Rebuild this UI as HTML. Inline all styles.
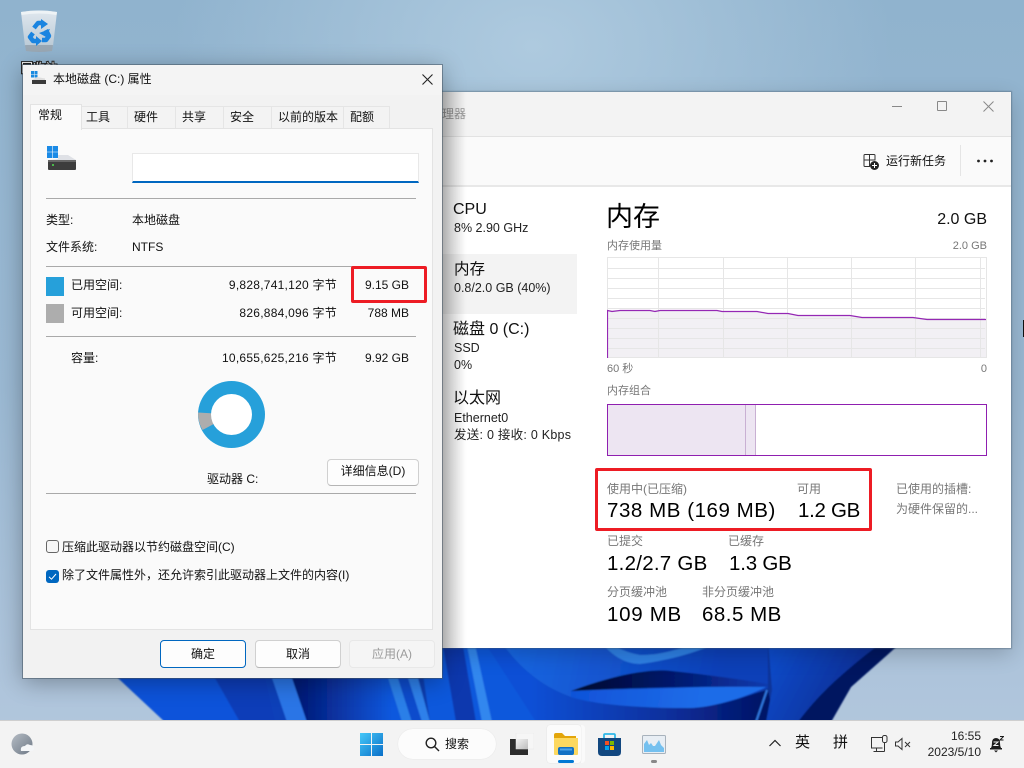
<!DOCTYPE html>
<html lang="zh-CN">
<head>
<meta charset="utf-8">
<title>内存</title>
<style>
html,body{margin:0;padding:0;width:1024px;height:768px;overflow:hidden}
body{position:relative;font-family:"Liberation Sans","Noto Sans CJK SC",sans-serif;font-size:12px;color:#111;background:#9dbbd4}
.a{position:absolute}
.t{position:absolute;white-space:nowrap;line-height:16px;height:16px}
.r{text-align:right}
.g{color:#777;font-size:11px}
.g2{color:#777;font-size:12px}
.hr{position:absolute;left:46px;width:370px;height:1px;background:#a9a9a9}
.tab{position:absolute;top:106px;height:22px;background:#f3f3f3;border:1px solid #e5e5e5;border-bottom:none;box-sizing:border-box}
.btn{position:absolute;box-sizing:border-box;background:#fdfdfd;border:1px solid #d0d0d0;border-bottom-color:#b5b5b5;border-radius:4px;text-align:center;line-height:26px;font-size:12px}
.big{font-size:20.5px;line-height:26px;height:26px;color:#000}
.side{font-size:16px;line-height:20px;height:20px}
.sub{font-size:12.5px;color:#222}
.red{position:absolute;box-sizing:border-box;border:3px solid #ed1c24;border-radius:2px}
.by{letter-spacing:.25px}
</style>
</head>
<body>
<svg class="a" style="left:0;top:0" width="1024" height="768" viewBox="0 0 1024 768">
<defs>
<linearGradient id="sky" x1="0" y1="0" x2="0" y2="1"><stop offset="0" stop-color="#90b3ce"/><stop offset=".5" stop-color="#9ab8d2"/><stop offset="1" stop-color="#b4c8de"/></linearGradient>
<radialGradient id="glow" cx=".52" cy=".06" r=".35"><stop offset="0" stop-color="#aecadf"/><stop offset="1" stop-color="#aecadf" stop-opacity="0"/></radialGradient>
<linearGradient id="rt" x1="0" y1="0" x2="1" y2="0"><stop offset="0" stop-color="#0c45c4"/><stop offset="1" stop-color="#09308f"/></linearGradient>
<linearGradient id="l3" gradientUnits="userSpaceOnUse" x1="300" y1="0" x2="392" y2="0"><stop offset="0" stop-color="#031a78"/><stop offset="1" stop-color="#0e58de"/></linearGradient>
<linearGradient id="low" gradientUnits="userSpaceOnUse" x1="530" y1="0" x2="760" y2="0"><stop offset="0" stop-color="#0f50d6"/><stop offset=".6" stop-color="#0a2f9c"/><stop offset="1" stop-color="#031468"/></linearGradient>
<linearGradient id="mid" gradientUnits="userSpaceOnUse" x1="570" y1="690" x2="700" y2="708"><stop offset="0" stop-color="#0f52d8"/><stop offset="1" stop-color="#1e6ce8"/></linearGradient>
<linearGradient id="wed" gradientUnits="userSpaceOnUse" x1="571" y1="0" x2="766" y2="0"><stop offset="0" stop-color="#01062c"/><stop offset=".55" stop-color="#041a70"/><stop offset="1" stop-color="#0a3aae"/></linearGradient>
<linearGradient id="top" gradientUnits="userSpaceOnUse" x1="500" y1="648" x2="720" y2="690"><stop offset="0" stop-color="#1a68e4"/><stop offset="1" stop-color="#0a3fb8"/></linearGradient>
<linearGradient id="rgt" gradientUnits="userSpaceOnUse" x1="770" y1="648" x2="870" y2="700"><stop offset="0" stop-color="#0d4ccc"/><stop offset="1" stop-color="#08298c"/></linearGradient>
<linearGradient id="bin" x1="0" y1="0" x2="0" y2="1"><stop offset="0" stop-color="#dfe7ee"/><stop offset="1" stop-color="#bccbd7"/></linearGradient>
<filter id="soft" x="-5%" y="-5%" width="110%" height="110%"><feGaussianBlur stdDeviation=".7"/></filter>
</defs>
<rect width="1024" height="768" fill="url(#sky)"/>
<rect width="1024" height="768" fill="url(#glow)"/>
<g filter="url(#soft)">
<path d="M118 678L165 722H831L851 687L904 640H100Z" fill="url(#rt)"/>
<path d="M118 678L165 722H240L215 678Z" fill="#0d52da"/>
<path d="M215 678L240 722H275L265 678Z" fill="#0a3cb8"/>
<path d="M272 678L287 722H307L292 678Z" fill="#2a74e6"/>
<path d="M292 678L307 722H402L388 678Z" fill="url(#l3)"/>
<path d="M388 678L402 722H412L398 678Z" fill="#2b7fe8"/>
<path d="M398 678L412 722H422L408 678Z" fill="#0e4ccc"/>
<path d="M408 678L422 722H430L418 678Z" fill="#2f80ea"/>
<path d="M418 640L430 722H538L483 640Z" fill="#1158dc"/>
<path d="M442 640L456 722H476L462 640Z" fill="#0a37ae"/>
<path d="M466 640L482 722H492L474 640Z" fill="#3287ee"/>
<path d="M483 640L536 722H775L768 690C740 697 710 708 689 708C650 708 600 706 571 697C545 688 520 670 500 640Z" fill="url(#low)"/>
<path d="M500 640C520 670 545 688 571 697C600 706 650 708 689 708C710 708 745 698 768 688L768 640Z" fill="url(#top)"/>
<path d="M571 691C630 690 710 686 768 686C745 698 710 708 689 708C650 708 600 706 571 697Z" fill="url(#mid)"/>
<path d="M571 691C610 676 650 668 672 671C710 675 745 680 768 684L768 687C700 686 630 688 571 691Z" fill="url(#wed)"/>
<path d="M600 640C610 655 625 664 640 664C670 660 700 652 722 640L700 640C680 650 660 655 640 655C625 652 615 648 612 640Z" fill="#2e80e4"/>
<path d="M768 640L772 690L766 722H800L835 690L885 640Z" fill="url(#rgt)"/>
<path d="M798 722C815 700 830 682 885 640L904 640L851 687L831 722Z" fill="#021460"/>
<path d="M767 690L756 722" stroke="#2f78e0" stroke-width="2" fill="none"/>
</g>
<!-- recycle bin -->
<path d="M21 12Q39 9 57 12L53 46H25Z" fill="url(#bin)"/>
<path d="M21 12Q39 9 57 12L56.500 15Q39 12 21.500 15Z" fill="#eef3f6"/>
<path d="M25 45H53L52 51Q39 53 26 51Z" fill="#9aa8b4"/>
<g fill="none" stroke="#1a84e0" stroke-width="4.500" stroke-linejoin="round"><path d="M34 28L38 23H42"/><path d="M33 33L30 37L33 41H37"/><path d="M46 30L49 36L46 40H42"/></g>
<g fill="#1a84e0"><path d="M41 19L48 24L41 29Z"/><path d="M36 36L42 41L36 46Z"/><path d="M39 33L50 29L46 37Z"/></g>
<text x="39" y="72" text-anchor="middle" font-size="12" fill="#fff" stroke="#222" stroke-width="2" paint-order="stroke" font-family="Liberation Sans,Noto Sans CJK SC,sans-serif">回收站</text>
</svg>
<div class="a" style="left:1023px;top:320px;width:1px;height:17px;background:#111"></div>

<!-- Task manager -->
<div class="a" style="left:420px;top:92px;width:591px;height:556px;background:#fff;box-shadow:0 0 1px 1px rgba(70,90,110,.45),0 6px 20px rgba(0,0,0,.2)">
  <div class="a" style="left:0;top:0;width:591px;height:44px;background:#f3f3f3;border-bottom:1px solid #e2e2e2"></div>
  <div class="a" style="left:0;top:45px;width:591px;height:48px;background:#fafafa;border-bottom:2px solid #e8e8e8"></div>
</div>
<div class="t" style="left:406px;top:106px;color:#999">任务管理器</div>
<div class="a" style="left:892px;top:106px;width:10px;height:1px;background:#888"></div>
<div class="a" style="left:937px;top:101px;width:10px;height:10px;box-sizing:border-box;border:1px solid #888;border-radius:1px"></div>
<svg class="a" style="left:983px;top:101px" width="11" height="11"><path d="M.5.5L10.5 10.5M10.5.5L.5 10.5" stroke="#888" fill="none"/></svg>
<svg class="a" style="left:862px;top:153px" width="18" height="18" fill="none" stroke="#333" stroke-width="1"><path d="M2 7V2.500Q2 1.500 3 1.500H7.500V7ZM7.500 1.500H12Q13 1.500 13 2.500V7H7.500ZM2 7H7.500V13.500H3Q2 13.500 2 12.500Z"/><circle cx="12.500" cy="12.500" r="4.500" fill="#222" stroke="none"/><path d="M10 12.500H15M12.500 10V15" stroke="#fff"/></svg>
<div class="t" style="left:886px;top:153px">运行新任务</div>
<div class="a" style="left:960px;top:145px;width:1px;height:31px;background:#e5e5e5"></div>
<svg class="a" style="left:976px;top:159px" width="18" height="4" fill="#222"><circle cx="2.500" cy="2" r="1.400"/><circle cx="9" cy="2" r="1.400"/><circle cx="15.500" cy="2" r="1.400"/></svg>

<div class="a" style="left:442px;top:254px;width:135px;height:60px;background:#f3f3f3"></div>
<div class="t side" style="left:453px;top:200px">CPU</div>
<div class="t sub" style="left:454px;top:220px">8% 2.90 GHz</div>
<div class="t side" style="left:454px;top:260px;font-size:15.5px">内存</div>
<div class="t sub" style="left:454px;top:280px">0.8/2.0 GB (40%)</div>
<div class="t side" style="left:453px;top:320px">磁盘 0 (C:)</div>
<div class="t sub" style="left:454px;top:340px">SSD</div>
<div class="t sub" style="left:454px;top:357px">0%</div>
<div class="t side" style="left:453px;top:389px">以太网</div>
<div class="t sub" style="left:454px;top:410px">Ethernet0</div>
<div class="t sub" style="left:454px;top:427px;letter-spacing:.25px">发送: 0 接收: 0 Kbps</div>
<div class="a" style="left:442px;top:92px;width:24px;height:556px;background:linear-gradient(90deg,rgba(0,0,0,.2),rgba(0,0,0,0))"></div>

<div class="t" style="left:606px;top:199px;font-size:27px;line-height:36px;height:36px;color:#000">内存</div>
<div class="t r" style="right:37px;top:210px;font-size:16px;line-height:20px;height:20px;color:#111">2.0 GB</div>
<div class="t g" style="left:607px;top:238px">内存使用量</div>
<div class="t g r" style="right:37px;top:238px">2.0 GB</div>
<svg class="a" style="left:607px;top:257px" width="381" height="102" viewBox="607 257 381 102" shape-rendering="crispEdges">
<path d="M607 310H640L650 310.500L660 310H717L720 311.500H757L768 313.500H788L798 315.500H850L862 317.500H913L927 319.500H987V358H607Z" fill="#f2f0f4"/>
<g stroke="#e6e6e6" fill="none"><path d="M607.500 257.500H986.500V357.500H607.500Z"/><path d="M608 268.500H985M608 278.500H985M608 288.500H985M608 298.500H985M608 308.500H985M608 318.500H985M608 328.500H985M608 338.500H985M608 348.500H985"/><path d="M658.500 258V357M723.500 258V357M787.500 258V357M851.500 258V357M915.500 258V357M980.500 258V357"/></g>
<path d="M607.500 358V310.500L612 311.500L620 310.500H650L655 311.500L660 310.500H717L722 311.500H757L768 313.500H788L798 315.500H850L862 317.500H913L927 319.500H986" fill="none" stroke="#9528b4" stroke-width="1.200" shape-rendering="auto"/>
</svg>
<div class="t g" style="left:607px;top:361px">60 秒</div>
<div class="t g r" style="right:37px;top:361px">0</div>
<div class="t g" style="left:607px;top:383px">内存组合</div>
<div class="a" style="left:607px;top:404px;width:380px;height:52px;box-sizing:border-box;border:1px solid #8f1fb0;background:#fff">
  <div class="a" style="left:0;top:0;width:137px;height:50px;background:#ede5f2;border-right:1px solid #c9b0d3"></div>
  <div class="a" style="left:138px;top:0;width:9px;height:50px;background:#ede5f2;border-right:1px solid #c9b0d3"></div>
</div>
<div class="red" style="left:595px;top:468px;width:277px;height:63px"></div>
<div class="t g2" style="left:607px;top:481px">使用中(已压缩)</div>
<div class="t big" style="left:607px;top:498px;letter-spacing:.55px">738 MB (169 MB)</div>
<div class="t g2" style="left:797px;top:481px">可用</div>
<div class="t big" style="left:798px;top:498px;letter-spacing:-.3px">1.2 GB</div>
<div class="t g2" style="left:896px;top:481px">已使用的插槽:</div>
<div class="t g2" style="left:896px;top:501px">为硬件保留的...</div>
<div class="t g2" style="left:607px;top:533px">已提交</div>
<div class="t big" style="left:607px;top:551px;letter-spacing:.25px">1.2/2.7 GB</div>
<div class="t g2" style="left:728px;top:533px">已缓存</div>
<div class="t big" style="left:729px;top:551px;letter-spacing:-.2px">1.3 GB</div>
<div class="t g2" style="left:607px;top:584px">分页缓冲池</div>
<div class="t big" style="left:607px;top:602px;letter-spacing:.7px">109 MB</div>
<div class="t g2" style="left:702px;top:584px">非分页缓冲池</div>
<div class="t big" style="left:702px;top:602px;letter-spacing:.5px">68.5 MB</div>

<!-- Properties dialog -->
<div class="a" style="left:23px;top:65px;width:419px;height:613px;background:#f2f2f2;box-shadow:0 0 0 1px rgba(70,85,100,.55),0 4px 22px rgba(0,0,0,.32)">
  <div class="a" style="left:0;top:0;width:419px;height:30px;background:#f4f4f4"></div>
</div>
<svg class="a" style="left:31px;top:71px" width="16" height="13"><path d="M0 0h3v3H0zM3.500 0h3v3h-3zM0 3.500h3v3H0zM3.500 3.500h3v3h-3z" fill="#1a8ae0"/><path d="M6 6L14 7.500V9H1Z" fill="#ddd"/><rect x="1" y="9" width="14" height="4" fill="#3a3a3a"/></svg>
<div class="t" style="left:53px;top:71px">本地磁盘 (C:) 属性</div>
<svg class="a" style="left:421px;top:73px" width="13" height="13"><path d="M1.500 1.500L11.500 11.500M11.500 1.500L1.500 11.500" stroke="#222" stroke-width="1.100" fill="none"/></svg>

<div class="a" style="left:30px;top:128px;width:403px;height:502px;box-sizing:border-box;background:#fafafa;border:1px solid #e3e3e3"></div>
<div class="tab" style="left:81px;width:47px"></div>
<div class="tab" style="left:127px;width:49px"></div>
<div class="tab" style="left:175px;width:49px"></div>
<div class="tab" style="left:223px;width:49px"></div>
<div class="tab" style="left:271px;width:73px"></div>
<div class="tab" style="left:343px;width:47px"></div>
<div class="a" style="left:30px;top:104px;width:52px;height:26px;box-sizing:border-box;background:#fafafa;border:1px solid #e3e3e3;border-bottom:none"></div>
<div class="t" style="left:38px;top:107px">常规</div>
<div class="t" style="left:86px;top:109px">工具</div>
<div class="t" style="left:134px;top:109px">硬件</div>
<div class="t" style="left:182px;top:109px">共享</div>
<div class="t" style="left:230px;top:109px">安全</div>
<div class="t" style="left:278px;top:109px">以前的版本</div>
<div class="t" style="left:350px;top:109px">配额</div>

<svg class="a" style="left:46px;top:145px" width="32" height="27"><path d="M1 1h5.200v5.700H1zM6.800 1H12v5.700H6.800zM1 7.300h5.200V13H1zM6.800 7.300H12V13H6.800z" fill="#1a8ae6"/><path d="M12 10H22L30 15V16H3V15L12 14Z" fill="#dfe1e6"/><rect x="2" y="15" width="28" height="10" rx="1" fill="#3d3d3d"/><rect x="2" y="15" width="28" height="2" fill="#666"/><circle cx="7" cy="20" r="1" fill="#4fe04f"/></svg>
<div class="a" style="left:132px;top:153px;width:287px;height:30px;box-sizing:border-box;background:#fff;border:1px solid #e8e8e8;border-bottom:2px solid #0067c0"></div>
<div class="hr" style="top:198px"></div>
<div class="t" style="left:46px;top:212px">类型:</div>
<div class="t" style="left:132px;top:212px">本地磁盘</div>
<div class="t" style="left:46px;top:239px">文件系统:</div>
<div class="t" style="left:132px;top:239px">NTFS</div>
<div class="hr" style="top:266px"></div>
<div class="a" style="left:46px;top:277px;width:18px;height:19px;background:#26a0da"></div>
<div class="t" style="left:71px;top:277px">已用空间:</div>
<div class="t r by" style="right:687px;top:277px">9,828,741,120 字节</div>
<div class="t r" style="right:615px;top:277px">9.15 GB</div>
<div class="a" style="left:46px;top:304px;width:18px;height:19px;background:#adadad"></div>
<div class="t" style="left:71px;top:305px">可用空间:</div>
<div class="t r by" style="right:687px;top:305px">826,884,096 字节</div>
<div class="t r" style="right:615px;top:305px">788 MB</div>
<div class="hr" style="top:336px"></div>
<div class="t" style="left:71px;top:350px">容量:</div>
<div class="t r by" style="right:687px;top:350px">10,655,625,216 字节</div>
<div class="t r" style="right:615px;top:350px">9.92 GB</div>
<svg class="a" style="left:197px;top:380px" width="70" height="70"><circle cx="34.500" cy="34.500" r="33.500" fill="#26a0da"/><path d="M34.500 34.500L1 32.500A33.500 33.500 0 0 0 5.500 50Z" fill="#adadad"/><circle cx="34.500" cy="34.500" r="20.500" fill="#fff"/></svg>
<div class="t" style="left:207px;top:471px">驱动器 C:</div>
<div class="btn" style="left:327px;top:459px;width:92px;height:27px;line-height:23px">详细信息(D)</div>
<div class="hr" style="top:493px"></div>
<div class="a" style="left:46px;top:540px;width:13px;height:13px;box-sizing:border-box;border:1px solid #666;border-radius:3px;background:#f6f6f6"></div>
<div class="t" style="left:62px;top:539px">压缩此驱动器以节约磁盘空间(C)</div>
<svg class="a" style="left:46px;top:570px" width="13" height="13"><rect width="13" height="13" rx="3" fill="#0067c0"/><path d="M3 6.800L5.500 9.200L10 4" stroke="#fff" stroke-width="1" fill="none"/></svg>
<div class="t" style="left:62px;top:567px">除了文件属性外，还允许索引此驱动器上文件的内容(I)</div>
<div class="btn" style="left:160px;top:640px;width:86px;height:28px;border:1px solid #0067c0">确定</div>
<div class="btn" style="left:255px;top:640px;width:86px;height:28px">取消</div>
<div class="btn" style="left:349px;top:640px;width:86px;height:28px;background:#f5f5f5;border-color:#e8e8e8;color:#9b9b9b">应用(A)</div>
<div class="red" style="left:351px;top:266px;width:76px;height:37px"></div>

<!-- Taskbar -->
<div class="a" style="left:0;top:720px;width:1024px;height:48px;background:#f3f3f3;border-top:1px solid #cfcfcf;box-sizing:border-box"></div>
<svg class="a" style="left:11px;top:733px" width="24" height="23"><defs><linearGradient id="w" x1="0" y1="0" x2="1" y2="1"><stop offset="0" stop-color="#b5bcc4"/><stop offset="1" stop-color="#6d7885"/></linearGradient></defs><circle cx="11" cy="11" r="10.500" fill="url(#w)"/><path d="M10 18Q9 13 14 13Q16 10 19 12Q23 12 23 15.500Q23 18 20 18Z" fill="#f4f6f8"/></svg>
<svg class="a" style="left:360px;top:733px" width="23" height="23"><defs><linearGradient id="s" x1="0" y1="0" x2="1" y2="1"><stop offset="0" stop-color="#45c8f8"/><stop offset="1" stop-color="#0a6fc8"/></linearGradient></defs><rect width="23" height="23" fill="url(#s)"/><path d="M11.500 0V23M0 11.500H23" stroke="#f3f3f3" stroke-width="1"/></svg>
<div class="a" style="left:398px;top:729px;width:98px;height:30px;background:#fcfcfc;border-radius:15px;box-shadow:0 0 1px rgba(0,0,0,.12)"></div>
<svg class="a" style="left:425px;top:737px" width="15" height="15" fill="none" stroke="#222" stroke-width="1.400"><circle cx="6" cy="6" r="4.800"/><path d="M9.500 9.500L14 14"/></svg>
<div class="t" style="left:445px;top:736px">搜索</div>
<svg class="a" style="left:510px;top:733px" width="24" height="23"><defs><linearGradient id="tv" x1="0" y1="0" x2="1" y2="1"><stop offset="0" stop-color="#f2f2f2"/><stop offset="1" stop-color="#bdbdbd"/></linearGradient></defs><rect x="0" y="6" width="18" height="16" fill="#2c2c2c"/><rect x="6" y="0" width="18" height="16" fill="#f6f6f6" stroke="#e6e6e6" stroke-width=".5"/><rect x="6" y="6" width="12" height="10" fill="url(#tv)"/></svg>
<div class="a" style="left:581px;top:725px;width:4px;height:38px;background:#fafafa;border-radius:0 3px 3px 0"></div>
<div class="a" style="left:547px;top:725px;width:34px;height:38px;background:#fbfbfb;border-radius:3px;box-shadow:0 0 1px rgba(0,0,0,.15)"></div>
<svg class="a" style="left:554px;top:733px" width="24" height="22"><path d="M0 2Q0 0 2 0H8L11 3H22V6H0Z" fill="#e3a50a"/><path d="M0 5H24V21Q24 22 23 22H1Q0 22 0 21Z" fill="#fcd860"/><rect x="4" y="14" width="16" height="8" rx="2" fill="#1170c4"/><rect x="6" y="15.500" width="12" height="2" fill="#4ba2e8"/></svg>
<div class="a" style="left:558px;top:760px;width:16px;height:3px;background:#0078d4;border-radius:2px"></div>
<svg class="a" style="left:598px;top:733px" width="23" height="23"><path d="M6 5V2Q6 1 7 1H16Q17 1 17 2V5" fill="none" stroke="#2fb8e8" stroke-width="1.800"/><path d="M0 5H23V19Q23 23 19 23H4Q0 23 0 19Z" fill="#12477f"/><rect x="7" y="8" width="4" height="4" fill="#f25022"/><rect x="12" y="8" width="4" height="4" fill="#7fba00"/><rect x="7" y="13" width="4" height="4" fill="#00a4ef"/><rect x="12" y="13" width="4" height="4" fill="#ffb900"/></svg>
<svg class="a" style="left:642px;top:735px" width="24" height="19"><rect x=".5" y=".5" width="23" height="18" rx="1" fill="#e8eef4" stroke="#a8b2bc"/><path d="M2 16V9L5 5L7 10L9 8L11 11L13 11L15 8L17 5L19 10L22 13V17H2Z" fill="#74c0ef"/></svg>
<div class="a" style="left:651px;top:760px;width:6px;height:3px;background:#888;border-radius:2px"></div>
<svg class="a" style="left:769px;top:739px" width="12" height="8"><path d="M.5 7L6 1.500L11.500 7" fill="none" stroke="#222" stroke-width="1.200"/></svg>
<div class="t" style="left:795px;top:735px;font-size:15px">英</div>
<div class="t" style="left:833px;top:735px;font-size:15px">拼</div>
<svg class="a" style="left:871px;top:735px" width="18" height="18" fill="none" stroke="#333" stroke-width="1"><path d="M11 2.500H.5V13H11.500M5.500 13V16.500M2.500 16.500H13.500M13.500 16.500V8"/><rect x="11.500" y=".5" width="4.500" height="7" rx="1.800"/></svg>
<svg class="a" style="left:895px;top:737px" width="16" height="14" fill="none" stroke="#333" stroke-width="1"><path d="M.5 5V9H3L7 12.500V1.500L3 5Z"/><path d="M10 5L15 10M15 5L10 10"/></svg>
<div class="t r" style="right:43px;top:728px;color:#222">16:55</div>
<div class="t r" style="right:43px;top:744px;color:#222">2023/5/10</div>
<svg class="a" style="left:989px;top:736px" width="15" height="17"><path d="M2 12Q3 10 3 7Q3 2 7 2Q11 2 11 7Q11 10 12 12Z" fill="#1c1c1c"/><rect x="1" y="12" width="12" height="1.500" fill="#1c1c1c"/><path d="M5 14.500H9L7 16.500Z" fill="#1c1c1c"/><path d="M4.500 6H9L5 9.500H9.500" stroke="#f3f3f3" fill="none"/><path d="M11 .5H14.500L11 4H14.500" stroke="#1c1c1c" fill="none"/></svg>
</body>
</html>
